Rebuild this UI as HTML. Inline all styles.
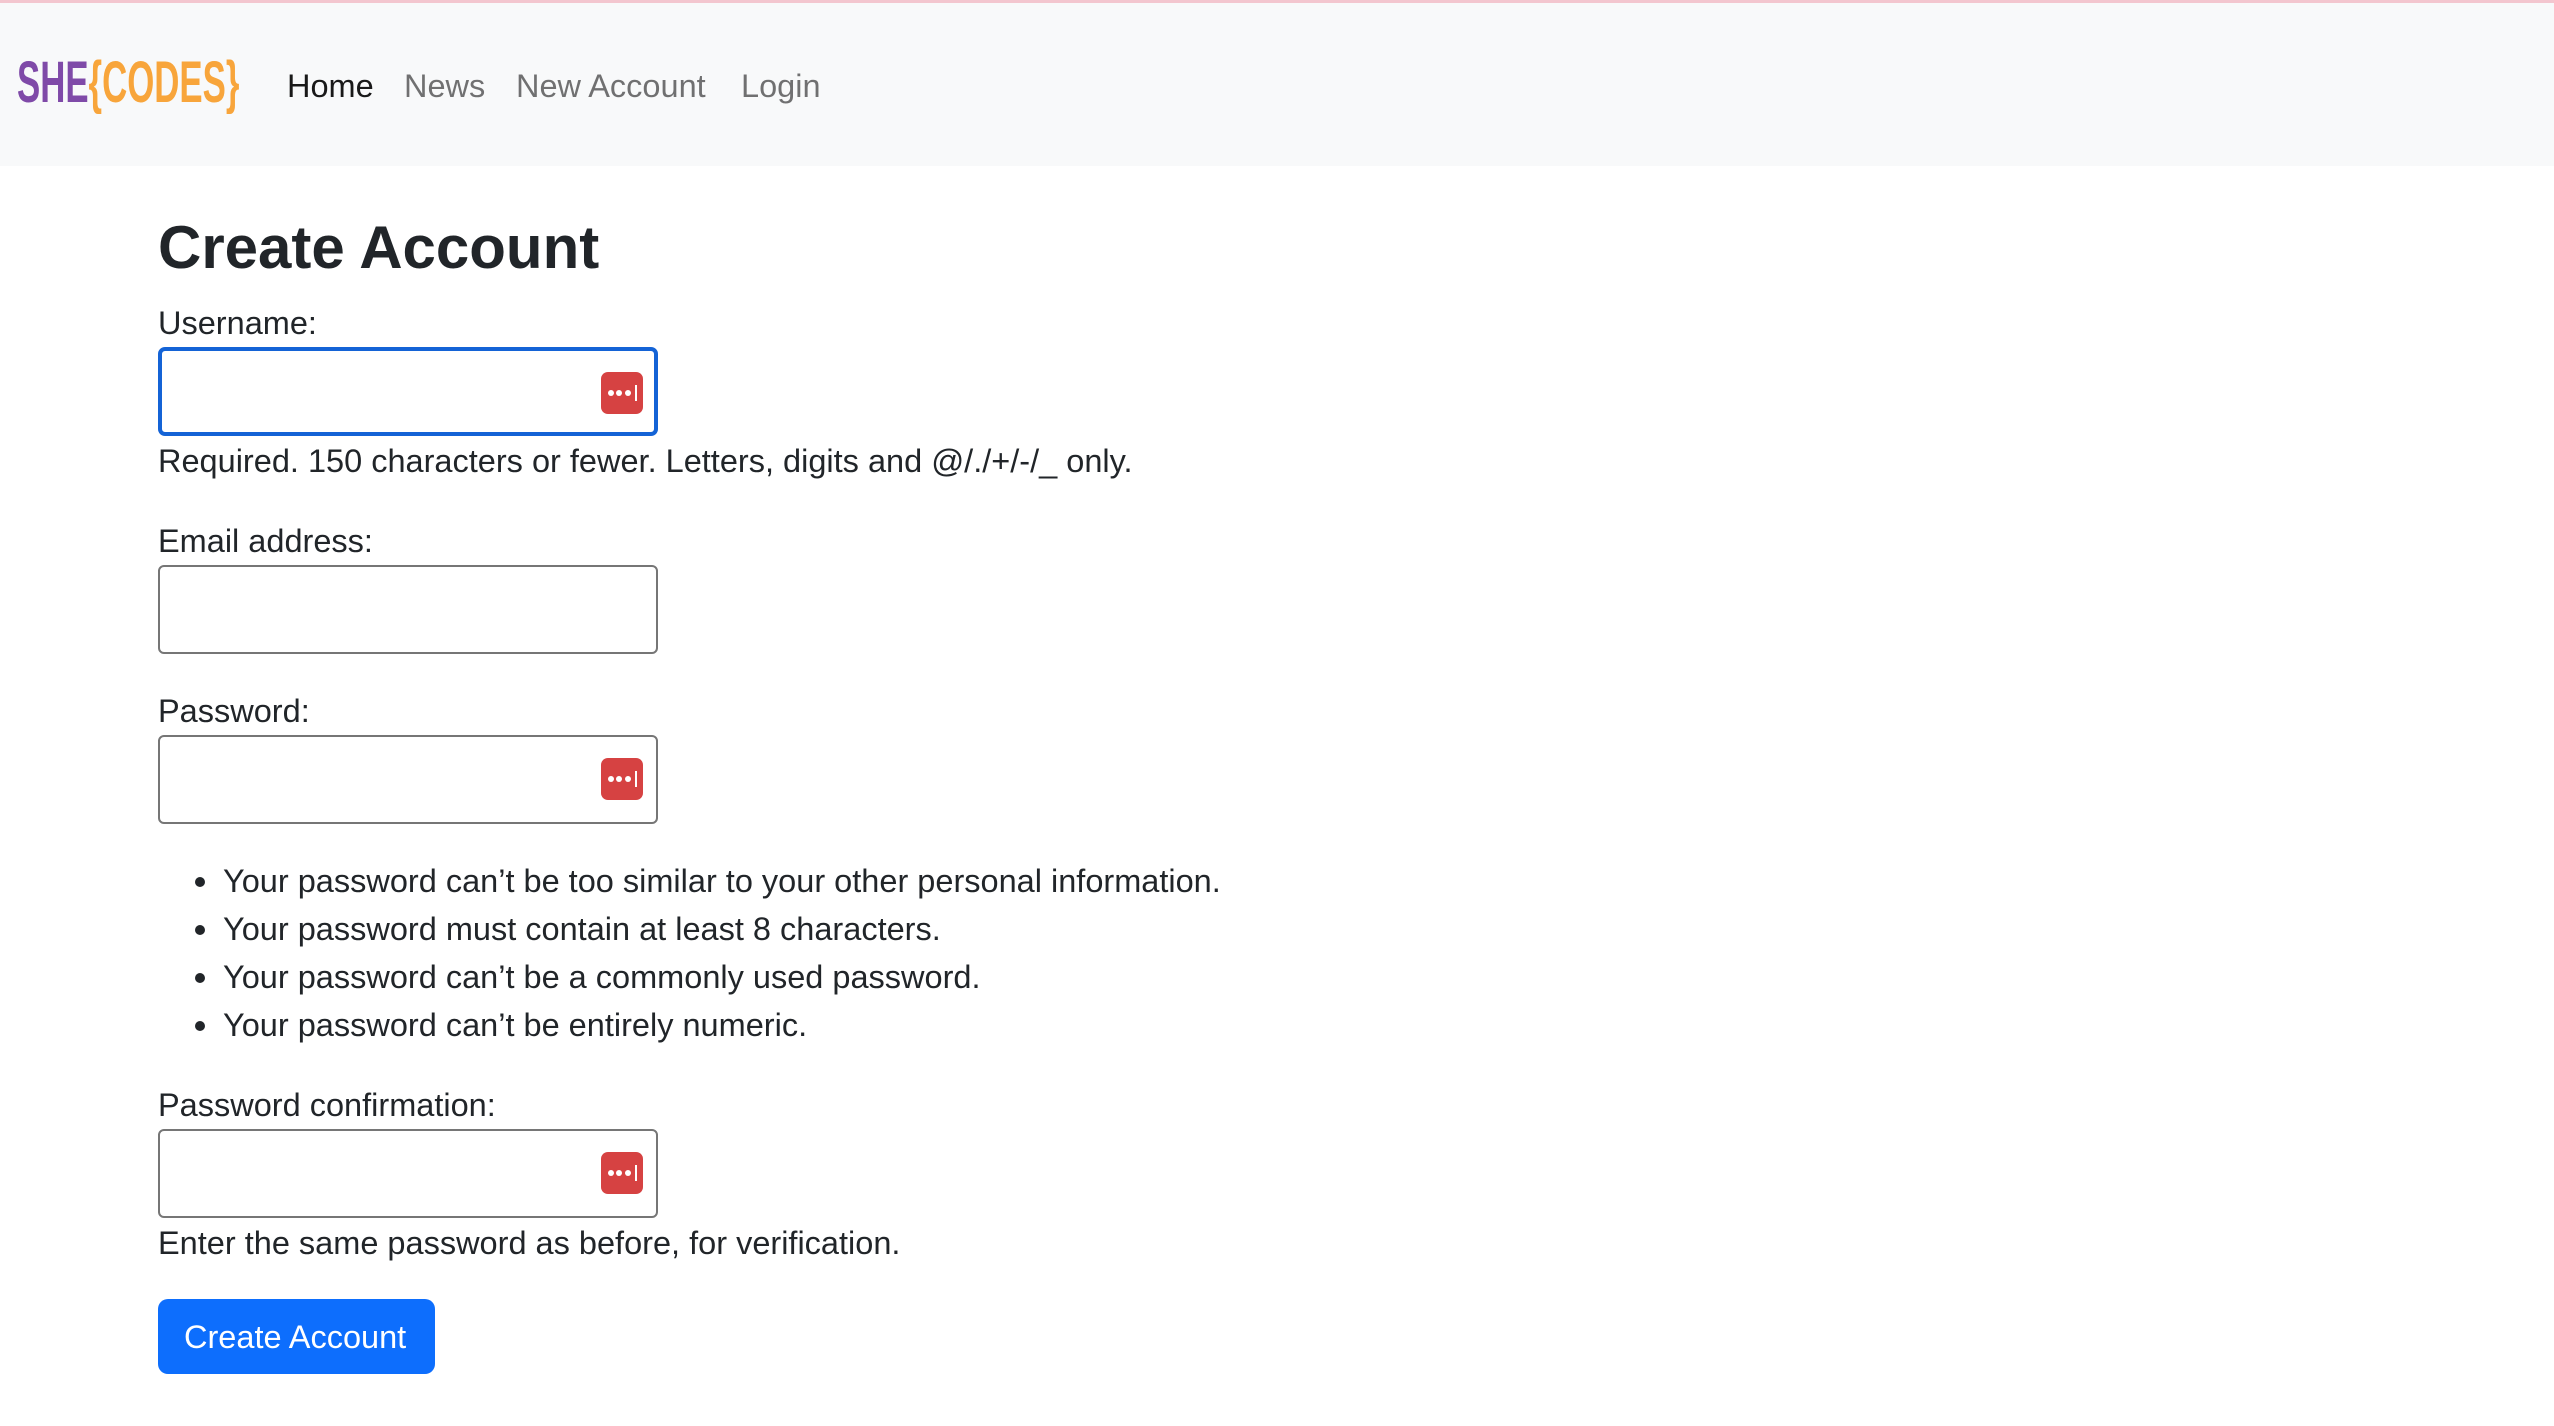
<!DOCTYPE html>
<html><head><meta charset="utf-8"><style>
*{margin:0;padding:0;box-sizing:border-box}
body{width:2554px;height:1426px;background:#fff;font-family:"Liberation Sans",Arial,sans-serif;color:#212529;position:relative;overflow:hidden}
.a{position:absolute;white-space:nowrap;line-height:1}
.t{font-size:32.5px}
.nav{position:absolute;left:0;top:0;width:2554px;height:166px;background:#f8f9fa;border-top:3px solid #f3c6cf}
.nl{font-size:32.5px;color:rgba(0,0,0,.55)}
.box{position:absolute;left:158px;width:500px;height:89px;border:2px solid #767676;border-radius:6px;background:#fff}
.ic{position:absolute;left:601px;width:42px;height:42px;background:#d64242;border-radius:7px}
.ic i{position:absolute;top:18px;width:6px;height:6px;border-radius:50%;background:#fff}
.ic b{position:absolute;left:34px;top:13px;width:2px;height:16px;background:#fff}
.li{position:absolute;left:195px;width:10px;height:10px;border-radius:50%;background:#212529}
</style></head><body>
<div class="nav"></div>
<div class="a" style="left:17px;top:54px;font-size:58px;transform:scaleX(0.6);transform-origin:0 0"><span style="color:#7f4aa8;font-weight:bold">SHE</span><span style="color:#f8a53b;font-weight:bold">{CODES}</span></div>
<div class="a nl" style="left:287px;top:70px;color:rgba(0,0,0,.9)">Home</div>
<div class="a nl" style="left:404px;top:70px">News</div>
<div class="a nl" style="left:516px;top:70px">New Account</div>
<div class="a nl" style="left:741px;top:70px">Login</div>

<div class="a" style="left:158px;top:218px;font-size:60px;font-weight:bold">Create Account</div>

<div class="a t" style="left:158px;top:307px">Username:</div>
<div class="box" style="top:347px;border:4px solid #1463d6;border-radius:7px"></div>
<div class="ic" style="top:372px"><i style="left:7px"></i><i style="left:15px"></i><i style="left:24px"></i><b></b></div>
<div class="a t" style="left:158px;top:445px">Required. 150 characters or fewer. Letters, digits and @/./+/-/_ only.</div>

<div class="a t" style="left:158px;top:525px">Email address:</div>
<div class="box" style="top:565px"></div>

<div class="a t" style="left:158px;top:695px">Password:</div>
<div class="box" style="top:735px"></div>
<div class="ic" style="top:758px"><i style="left:7px"></i><i style="left:15px"></i><i style="left:24px"></i><b></b></div>

<div class="li" style="top:877px"></div><div class="a t" style="left:223px;top:865px">Your password can’t be too similar to your other personal information.</div>
<div class="li" style="top:925px"></div><div class="a t" style="left:223px;top:913px">Your password must contain at least 8 characters.</div>
<div class="li" style="top:973px"></div><div class="a t" style="left:223px;top:961px">Your password can’t be a commonly used password.</div>
<div class="li" style="top:1021px"></div><div class="a t" style="left:223px;top:1009px">Your password can’t be entirely numeric.</div>

<div class="a t" style="left:158px;top:1089px">Password confirmation:</div>
<div class="box" style="top:1129px"></div>
<div class="ic" style="top:1152px"><i style="left:7px"></i><i style="left:15px"></i><i style="left:24px"></i><b></b></div>
<div class="a t" style="left:158px;top:1227px">Enter the same password as before, for verification.</div>

<div style="position:absolute;left:158px;top:1299px;width:277px;height:75px;background:#0d6efd;border-radius:10px"></div>
<div class="a t" style="left:184px;top:1321px;color:#fff">Create Account</div>
</body></html>
